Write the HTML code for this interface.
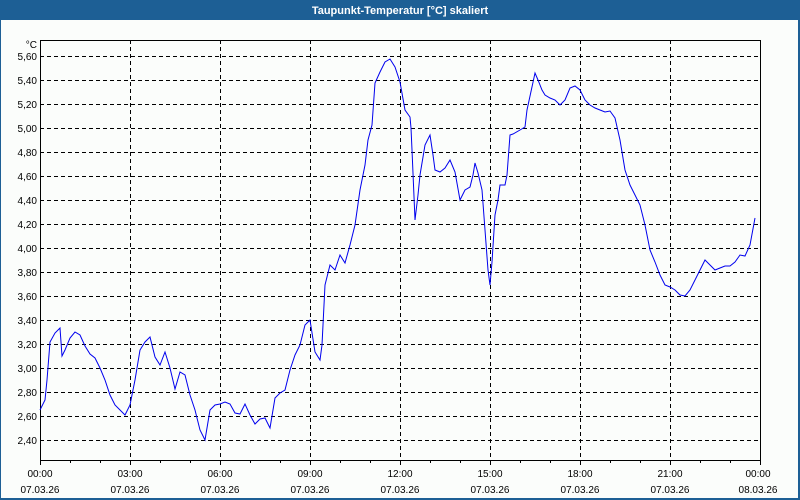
<!DOCTYPE html>
<html><head><meta charset="utf-8"><style>
html,body{margin:0;padding:0;width:800px;height:500px;overflow:hidden;background:#fbfdfb;font-family:"Liberation Sans",sans-serif}
</style></head><body>
<svg width="800" height="500" xmlns="http://www.w3.org/2000/svg" style="position:absolute;left:0;top:0">
<rect x="0" y="0" width="800" height="500" fill="#fbfdfb"/>
<rect x="0" y="0" width="800" height="20" fill="#1d5f95"/>
<rect x="0" y="0" width="1" height="500" fill="#1d5f95"/>
<rect x="798" y="0" width="2" height="500" fill="#1d5f95"/>
<rect x="0" y="498" width="800" height="2" fill="#1d5f95"/>
<text x="400" y="14" fill="#fff" font-size="11" font-weight="bold" text-anchor="middle">Taupunkt-Temperatur [°C] skaliert</text>
<g stroke="#000" stroke-width="1" stroke-dasharray="4,3" shape-rendering="crispEdges">
<line x1="40" y1="56.5" x2="760" y2="56.5"/><line x1="40" y1="80.5" x2="760" y2="80.5"/><line x1="40" y1="104.5" x2="760" y2="104.5"/><line x1="40" y1="128.5" x2="760" y2="128.5"/><line x1="40" y1="152.5" x2="760" y2="152.5"/><line x1="40" y1="176.5" x2="760" y2="176.5"/><line x1="40" y1="200.5" x2="760" y2="200.5"/><line x1="40" y1="224.5" x2="760" y2="224.5"/><line x1="40" y1="248.5" x2="760" y2="248.5"/><line x1="40" y1="272.5" x2="760" y2="272.5"/><line x1="40" y1="296.5" x2="760" y2="296.5"/><line x1="40" y1="320.5" x2="760" y2="320.5"/><line x1="40" y1="344.5" x2="760" y2="344.5"/><line x1="40" y1="368.5" x2="760" y2="368.5"/><line x1="40" y1="392.5" x2="760" y2="392.5"/><line x1="40" y1="416.5" x2="760" y2="416.5"/><line x1="40" y1="440.5" x2="760" y2="440.5"/>
<line x1="130.5" y1="40" x2="130.5" y2="460"/><line x1="220.5" y1="40" x2="220.5" y2="460"/><line x1="310.5" y1="40" x2="310.5" y2="460"/><line x1="400.5" y1="40" x2="400.5" y2="460"/><line x1="490.5" y1="40" x2="490.5" y2="460"/><line x1="580.5" y1="40" x2="580.5" y2="460"/><line x1="670.5" y1="40" x2="670.5" y2="460"/>
</g>
<rect x="40.5" y="40.5" width="720" height="420" fill="none" stroke="#000" stroke-width="1" shape-rendering="crispEdges"/>
<g stroke="#000" shape-rendering="crispEdges">
<path d="M40.5 460v5M70.5 460v3M100.5 460v3M130.5 460v5M160.5 460v3M190.5 460v3M220.5 460v5M250.5 460v3M280.5 460v3M310.5 460v5M340.5 460v3M370.5 460v3M400.5 460v5M430.5 460v3M460.5 460v3M490.5 460v5M520.5 460v3M550.5 460v3M580.5 460v5M610.5 460v3M640.5 460v3M670.5 460v5M700.5 460v3M730.5 460v3M760.5 460v5"/>
</g>
<polyline fill="none" stroke="#0000ee" stroke-width="1" points="40,410 45,400 47,380 50,342 55,333 60,328 62,356 65,350 70,338 75,332 80,335 85,346 90,354 95,358 100,368 105,380 110,395 115,405 125,415 130,405 135,380 140,350 145,342 150,337 155,357 160,365 165,352 170,368 175,389 180,372 185,375 190,395 195,410 200,430 205,440 210,410 215,405 220,404 225,402 230,404 235,413 240,414 245,404 250,415 255,424 260,419 265,418 270,428 275,398 280,393 285,390 290,370 295,355 300,345 305,325 310,320 315,352 320,360 322,345 325,285 330,265 335,270 340,255 345,263 350,245 355,225 360,190 365,165 368,140 372,125 375,83 380,72 385,62 390,59 395,67 400,82 405,110 410,117 411,128 412,150 415,220 418,195 420,175 425,145 430,135 433,155 435,170 440,172 445,168 450,160 455,172 460,200 465,190 470,187 473,175 475,163 478,173 482,190 485,230 488,270 490,285 492,262 495,215 498,200 500,185 505,185 507,175 510,135 513,134 520,130 525,127 527,110 535,73 538,80 542,90 545,95 550,98 555,100 560,105 565,100 570,88 575,86 580,90 585,100 590,105 595,108 600,110 605,112 610,111 615,118 620,140 625,170 630,185 635,195 640,205 645,225 650,250 655,262 660,275 665,285 670,287 675,290 680,295 685,296 690,290 695,280 700,270 705,260 710,265 715,270 720,268 725,266 730,266 735,262 740,255 745,256 750,245 755,218"/>
<g font-size="10" fill="#000" text-anchor="end">
<text x="37" y="48">°C</text>
<text x="37" y="60">5,60</text><text x="37" y="84">5,40</text><text x="37" y="108">5,20</text><text x="37" y="132">5,00</text><text x="37" y="156">4,80</text><text x="37" y="180">4,60</text><text x="37" y="204">4,40</text><text x="37" y="228">4,20</text><text x="37" y="252">4,00</text><text x="37" y="276">3,80</text><text x="37" y="300">3,60</text><text x="37" y="324">3,40</text><text x="37" y="348">3,20</text><text x="37" y="372">3,00</text><text x="37" y="396">2,80</text><text x="37" y="420">2,60</text><text x="37" y="444">2,40</text>
</g>
<g font-size="10" fill="#000" text-anchor="middle">
<text x="40" y="477">00:00</text><text x="40" y="493">07.03.26</text>
<text x="130" y="477">03:00</text><text x="130" y="493">07.03.26</text>
<text x="220" y="477">06:00</text><text x="220" y="493">07.03.26</text>
<text x="310" y="477">09:00</text><text x="310" y="493">07.03.26</text>
<text x="400" y="477">12:00</text><text x="400" y="493">07.03.26</text>
<text x="490" y="477">15:00</text><text x="490" y="493">07.03.26</text>
<text x="580" y="477">18:00</text><text x="580" y="493">07.03.26</text>
<text x="670" y="477">21:00</text><text x="670" y="493">07.03.26</text>
<text x="758" y="477">00:00</text><text x="758" y="493">08.03.26</text>
</g>
</svg>
</body></html>
